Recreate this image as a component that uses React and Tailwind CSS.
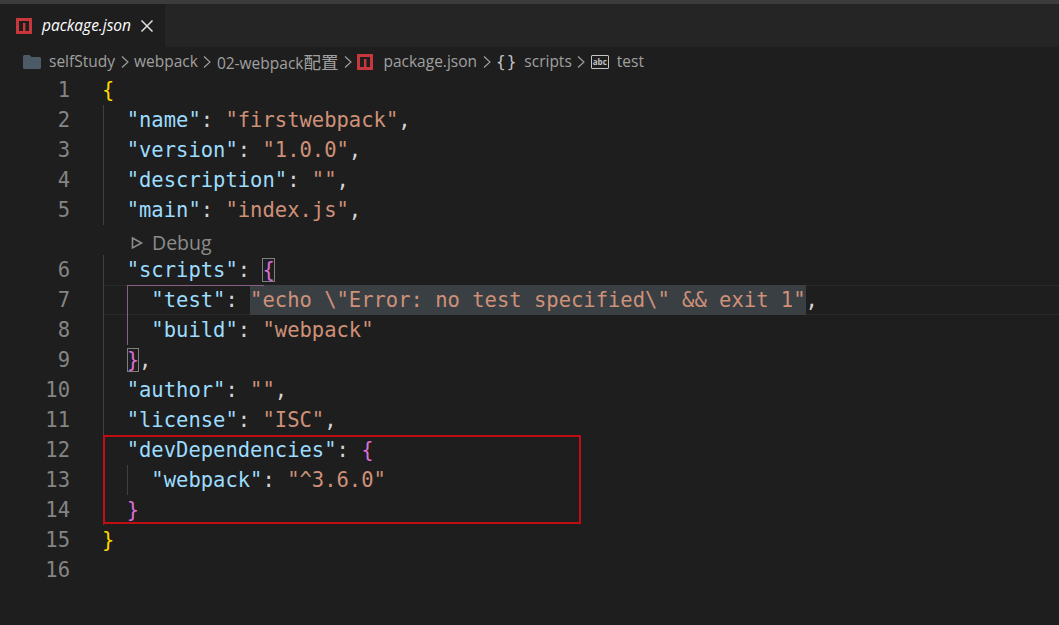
import React from "react";

const K = "text-[#9cdcfe]";
const S = "text-[#ce9178]";
const P = "text-[#d4d4d4]";
const Y = "text-[#ffd700]";
const M = "text-[#da70d6]";

// each line: [gutter number or null, tokens]
const lines = [
  [1, [[Y, "{"]]],
  [2, [[K, '  "name"'], [P, ": "], [S, '"firstwebpack"'], [P, ","]]],
  [3, [[K, '  "version"'], [P, ": "], [S, '"1.0.0"'], [P, ","]]],
  [4, [[K, '  "description"'], [P, ": "], [S, '""'], [P, ","]]],
  [5, [[K, '  "main"'], [P, ": "], [S, '"index.js"'], [P, ","]]],
  [null, null],
  [6, [[K, '  "scripts"'], [P, ": "], [M, "{", "match"]]],
  [7, [[K, '    "test"'], [P, ": "], [S, '"echo \\"Error: no test specified\\" && exit 1"', "sel"], [P, ","]]],
  [8, [[K, '    "build"'], [P, ": "], [S, '"webpack"']]],
  [9, [[P, "  "], [M, "}", "match"], [P, ","]]],
  [10, [[K, '  "author"'], [P, ": "], [S, '""'], [P, ","]]],
  [11, [[K, '  "license"'], [P, ": "], [S, '"ISC"'], [P, ","]]],
  [12, [[K, '  "devDependencies"'], [P, ": "], [M, "{"]]],
  [13, [[K, '    "webpack"'], [P, ": "], [S, '"^3.6.0"']]],
  [14, [[P, "  "], [M, "}"]]],
  [15, [[Y, "}"]]],
  [16, []],
];

const NpmIcon = ({ size = 16 }) => (
  <svg width={size} height={size} viewBox="0 0 16 16" className="shrink-0">
    <rect x="0" y="0" width="16" height="16" fill="#c8373c" />
    <rect x="3" y="3" width="10" height="10" fill="#1e1e1e" />
    <rect x="7" y="5" width="2.4" height="8" fill="#c8373c" />
  </svg>
);

const Chevron = () => (
  <span className="mx-[4.5px] flex">
    <svg width="10" height="16" viewBox="0 0 10 16" className="shrink-0">
      <path d="M2 2.5 L8 8 L2 13.5" fill="none" stroke="#a0a0a0" strokeWidth="1.1" />
    </svg>
  </span>
);

const Token = ({ color, text, kind }) => {
  if (kind === "sel") return <span className={`${color} bg-[#3a3f44] py-[3px]`}>{text}</span>;
  if (kind === "match")
    return <span className={`${color} outline outline-1 -outline-offset-1 outline-[#7f7f7f]`}>{text}</span>;
  return <span className={color}>{text}</span>;
};

const CodeLine = ({ num, tokens }) => {
  if (num === null) {
    return (
      <div className="flex h-[30px] items-center pl-[130px] pt-[6px] font-['Open_Sans','Noto_Sans',sans-serif] text-[19.5px] text-[#8c8c8c]">
        <svg width="14" height="16" viewBox="0 0 14 16" className="mr-[8px]">
          <path d="M2.5 3 L11.5 8 L2.5 13 Z" fill="none" stroke="#8c8c8c" strokeWidth="1.6" />
        </svg>
        Debug
      </div>
    );
  }
  return (
    <div className="flex h-[30px] items-center">
      <div className="w-[70px] shrink-0 text-right text-[#858585]">{num}</div>
      <div className={`ml-[33px] h-[30px] grow whitespace-pre ${num === 7 ? "border-y border-[#2a2a2a] leading-[28px]" : ""}`}>
        <span className="-ml-px">
          {tokens.map((t, i) => (
            <Token key={i} color={t[0]} text={t[1]} kind={t[2]} />
          ))}
        </span>
      </div>
    </div>
  );
};

export default function App() {
  return (
    <div className="flex h-[625px] w-[1059px] flex-col overflow-hidden bg-[#1e1e1e]">
      <div className="h-[4px] shrink-0 bg-[#3c3c3c]" />
      <div className="flex h-[43px] shrink-0 bg-[#252526]">
        <div className="flex w-[165px] items-center bg-[#1e1e1e] pl-[16px] font-['Open_Sans','Noto_Sans',sans-serif] text-[15.5px] text-white">
          <NpmIcon />
          <span className="ml-[10px] italic">package.json</span>
          <svg width="14" height="14" viewBox="0 0 14 14" className="ml-[9px]">
            <path d="M1.5 1.5 L12.5 12.5 M12.5 1.5 L1.5 12.5" stroke="#e0e0e0" strokeWidth="1.5" />
          </svg>
        </div>
      </div>
      <div className="flex h-[28px] shrink-0 items-center pl-[22px] pt-[2px] font-['Open_Sans','Noto_Sans_CJK_SC',sans-serif] text-[15.5px] text-[#a0a0a0]">
        <svg width="20" height="16" viewBox="0 0 20 16" className="mr-[7px] shrink-0">
          <path d="M1 2.5 Q1 1 2.5 1 H7.5 L9.5 3 H17.5 Q19 3 19 4.5 V13.5 Q19 15 17.5 15 H2.5 Q1 15 1 13.5 Z" fill="#4c5a68" />
        </svg>
        <span>selfStudy</span>
        <Chevron />
        <span>webpack</span>
        <Chevron />
        <span>
          02-webpack<span className="text-[17.5px]">配置</span>
        </span>
        <Chevron />
        <NpmIcon />
        <span className="ml-[10px]">package.json</span>
        <Chevron />
        <span className="font-['DejaVu_Sans_Mono',monospace] text-[16px] leading-none tracking-[1px] text-[#c4c4c4]">{"{}"}</span>
        <span className="ml-[7px]">scripts</span>
        <Chevron />
        <span className="flex h-[14px] w-[18px] items-center justify-center rounded-[1px] border border-[#c4c4c4] text-[8px] font-bold leading-none text-[#c4c4c4]">abc</span>
        <span className="ml-[8px]">test</span>
      </div>
      <div className="relative font-['DejaVu_Sans_Mono',monospace] text-[20.5px] leading-[30px]">
        {lines.map(([num, tokens], i) => (
          <CodeLine key={i} num={num} tokens={tokens} />
        ))}
        {/* indent and bracket guides */}
        <div className="absolute left-[103px] top-[30px] h-[120px] w-px bg-[#404040]" />
        <div className="absolute left-[103px] top-[180px] h-[270px] w-px bg-[#404040]" />
        <div className="absolute left-[127px] top-[210px] h-[60px] w-px bg-[#8a5f84]" />
        <div className="absolute left-[127px] top-[210px] h-px w-[137px] bg-[#8a5f84]" />
        <div className="absolute left-[127px] top-[390px] h-[30px] w-px bg-[#404040]" />
        {/* red annotation box */}
        <div className="absolute left-[103px] top-[360px] h-[89px] w-[478px] border-2 border-[#c00f14]" />
      </div>
    </div>
  );
}
